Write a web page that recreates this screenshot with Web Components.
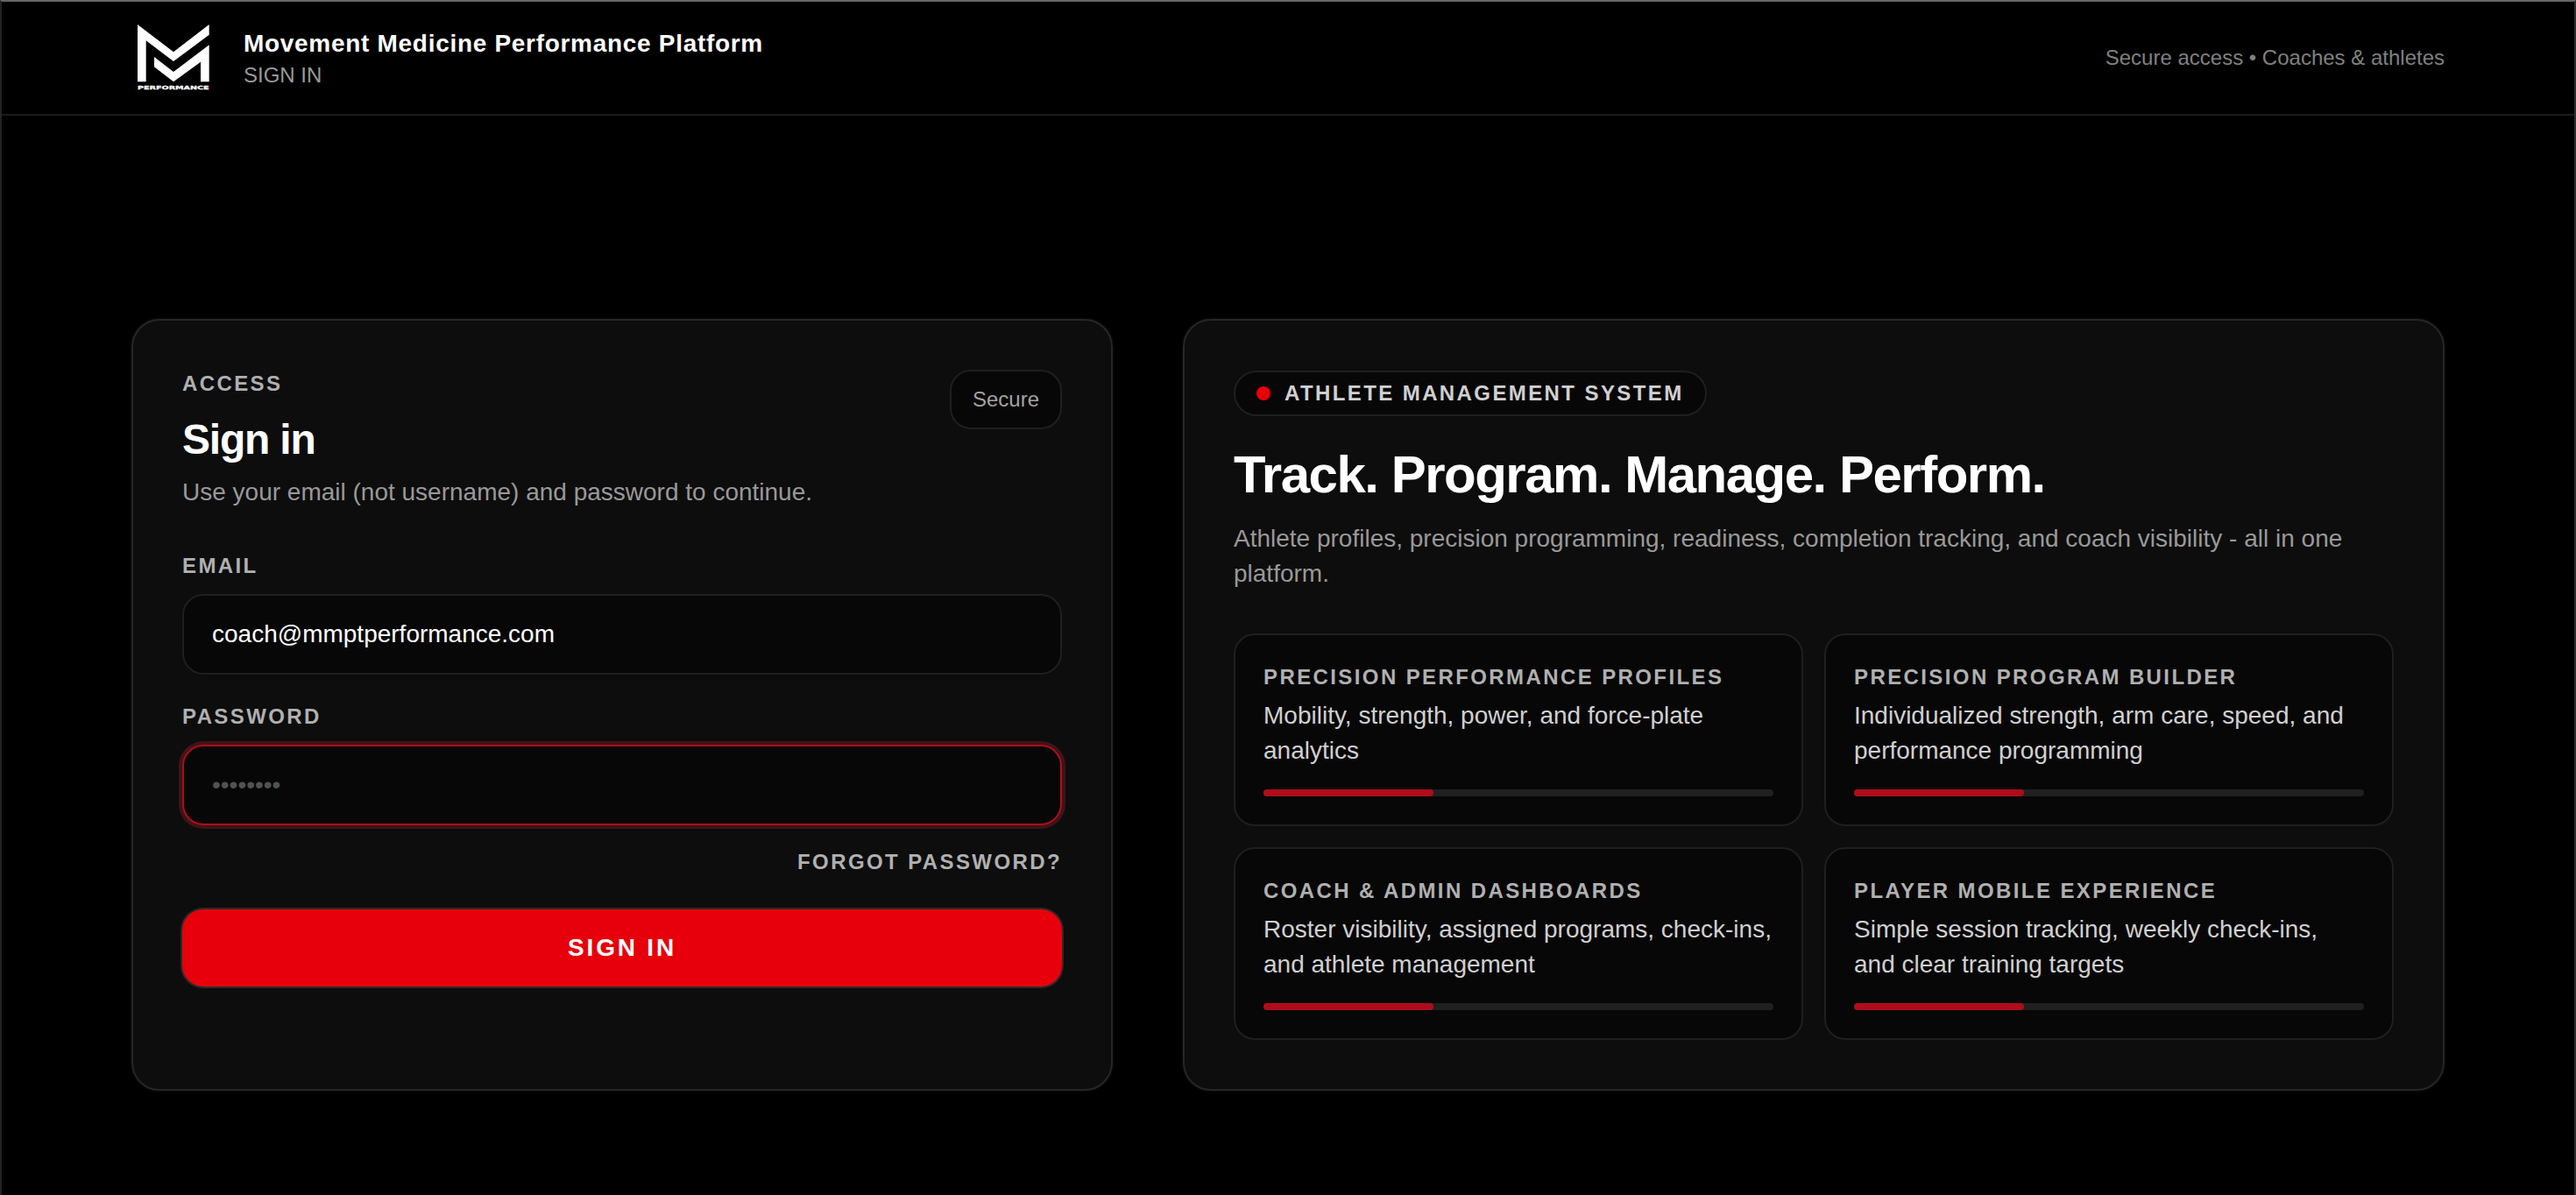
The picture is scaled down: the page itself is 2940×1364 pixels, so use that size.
<!DOCTYPE html>
<html lang="en">
<head>
<meta charset="utf-8">
<title>Movement Medicine Performance Platform</title>
<style>
  html, body { margin: 0; height: 100%; background: #000; }
  body {
    font-family: "Liberation Sans", Arial, sans-serif;
    font-size: 28px;
    line-height: 40px;
    color: #fff;
    --panel: #0d0d0d;
    --inset: #070707;
    --line: #262626;
    --line-soft: #1f1f1f;
    --red: #e7000b;
    --red-dim: #ae0d1a;
  }
</style>
</head>
<body>
<mm-page>
  <mm-header slot="header" heading="Movement Medicine Performance Platform" sub="SIGN IN">Secure access • Coaches &amp; athletes</mm-header>

  <mm-panel>
    <mm-login></mm-login>
  </mm-panel>

  <mm-panel>
    <mm-hero>
      <span slot="pill">ATHLETE MANAGEMENT SYSTEM</span>
      <span slot="title">Track. Program. Manage. Perform.</span>
      <span slot="lead">Athlete profiles, precision programming, readiness, completion tracking, and coach visibility - all in one platform.</span>
      <mm-feature label="PRECISION PERFORMANCE PROFILES">Mobility, strength, power, and force-plate analytics</mm-feature>
      <mm-feature label="PRECISION PROGRAM BUILDER">Individualized strength, arm care, speed, and performance programming</mm-feature>
      <mm-feature label="COACH &amp; ADMIN DASHBOARDS">Roster visibility, assigned programs, check-ins, and athlete management</mm-feature>
      <mm-feature label="PLAYER MOBILE EXPERIENCE">Simple session tracking, weekly check-ins, and clear training targets</mm-feature>
    </mm-hero>
  </mm-panel>
</mm-page>

<script>
(() => {
  class Base extends HTMLElement {
    constructor() {
      super();
      this.attachShadow({ mode: "open" });
    }

    connectedCallback() {
      this.shadowRoot.innerHTML = `
        <style>*, :host { box-sizing: border-box; }</style>
        ${this.template()}
      `;
    }

    text(name) {
      const span = document.createElement("span");
      span.textContent = this.getAttribute(name) || "";
      return span.innerHTML;
    }
  }

  class MmPage extends Base {
    template() {
      return `
        <style>
          :host {
            display: flex;
            flex-direction: column;
            width: 100%;
            height: 1364px;
            border: 2px solid #2e2e2e;
            border-left-color: #242424;
            border-top-color: #666;
            border-bottom: 0;
            overflow: hidden;
          }
          main {
            display: grid;
            grid-template-columns: 7fr 9fr;
            gap: 80px;
            padding: 232px 148px 0;
          }
        </style>
        <slot name="header"></slot>
        <main><slot></slot></main>
      `;
    }
  }

  class MmLogo extends Base {
    template() {
      return `
        <style>
          :host { display: block; width: 82px; height: 76px; }
          svg { display: block; width: 100%; height: 100%; }
        </style>
        <svg viewBox="51 54 246 228" fill="#fff">
          <path d="M51 54 174 148 296 54V89L174 180 80 109V250H51Z"/>
          <path d="M108 165 174 216 296 124V250H267V182L174 250 108 199Z"/>
          <text x="51" y="276.5" font-family="DejaVu Sans" font-weight="700" font-size="17"
            stroke="#fff" stroke-width="0.8" textLength="245" lengthAdjust="spacingAndGlyphs">PERFORMANCE</text>
        </svg>
      `;
    }
  }

  class MmHeader extends Base {
    template() {
      return `
        <style>
          :host {
            display: flex;
            align-items: center;
            justify-content: space-between;
            height: 130px;
            padding: 0 148px 0 155px;
            border-bottom: 2px solid #1c1c1c;
          }
          .brand { display: flex; align-items: center; gap: 39px; }
          .title { font-weight: 700; letter-spacing: 0.025em; line-height: 40px; }
          .sub { font-size: 24px; line-height: 32px; color: #999; }
          .note { font-size: 24px; line-height: 32px; color: #808080; }
        </style>
        <div class="brand">
          <mm-logo></mm-logo>
          <div>
            <div class="title">${this.text("heading")}</div>
            <div class="sub">${this.text("sub")}</div>
          </div>
        </div>
        <div class="note"><slot></slot></div>
      `;
    }
  }

  class MmPanel extends Base {
    template() {
      return `
        <style>
          :host {
            display: block;
            height: 881px;
            padding: 56px;
            border: 2px solid var(--line);
            border-radius: 32px;
            background: var(--panel);
            box-shadow: 0 0 0 2px #060606;
          }
        </style>
        <slot></slot>
      `;
    }
  }

  class MmField extends Base {
    template() {
      const type = this.getAttribute("type") || "text";
      return `
        <style>
          :host { display: block; }
          label {
            display: block;
            font-size: 24px;
            font-weight: 700;
            line-height: 32px;
            letter-spacing: 0.1em;
            color: #b0b0b0;
          }
          .box {
            display: flex;
            align-items: center;
            height: 92px;
            margin-top: 16px;
            padding: 0 32px;
            border: 2px solid var(--line-soft);
            border-radius: 24px;
            background: var(--inset);
          }
          :host([active]) .box { border-color: var(--red-dim); box-shadow: 0 0 0 4px #3f1417; }
          input {
            width: 100%;
            padding: 0;
            border: 0;
            outline: 0;
            background: none;
            color: #fff;
            font: inherit;
          }
          input::placeholder { color: #525252; opacity: 1; }
        </style>
        <label>${this.text("label")}</label>
        <div class="box">
          <input type="${type}" value="${this.text("value")}" placeholder="${this.text("placeholder")}">
        </div>
      `;
    }
  }

  class MmLogin extends Base {
    template() {
      return `
        <style>
          :host { display: block; }
          .top { display: flex; justify-content: space-between; align-items: flex-start; }
          .eyebrow { font-size: 24px; font-weight: 700; line-height: 32px; letter-spacing: 0.1em; color: #b0b0b0; }
          h1 { margin: 16px 0 0; font-size: 48px; line-height: 64px; letter-spacing: -0.025em; }
          p { margin: 8px 0 0; color: #999; }
          .tag {
            padding: 16px 24px;
            border: 2px solid var(--line-soft);
            border-radius: 24px;
            background: var(--inset);
            font-size: 24px;
            line-height: 32px;
            color: #a3a3a3;
          }
          mm-field { margin-top: 48px; }
          mm-field + mm-field { margin-top: 32px; }
          .forgot {
            margin-top: 26px;
            text-align: right;
            font-size: 24px;
            font-weight: 700;
            line-height: 32px;
            letter-spacing: 0.1em;
            color: #b0b0b0;
          }
          button {
            display: block;
            width: 100%;
            height: 88px;
            margin-top: 38px;
            padding: 0;
            border: 0;
            border-radius: 24px;
            background: var(--red);
            box-shadow: 0 0 0 2px #2a2a2a;
            color: #fff;
            font: inherit;
            font-weight: 700;
            letter-spacing: 0.1em;
          }
        </style>
        <div class="top">
          <div>
            <div class="eyebrow">ACCESS</div>
            <h1>Sign in</h1>
            <p>Use your email (not username) and password to continue.</p>
          </div>
          <div class="tag">Secure</div>
        </div>
        <mm-field label="EMAIL" value="coach@mmptperformance.com"></mm-field>
        <mm-field label="PASSWORD" type="password" placeholder="••••••••" active></mm-field>
        <div class="forgot">FORGOT PASSWORD?</div>
        <button>SIGN IN</button>
      `;
    }
  }

  class MmHero extends Base {
    template() {
      return `
        <style>
          :host { display: block; }
          .pill {
            display: flex;
            align-items: center;
            gap: 16px;
            width: fit-content;
            height: 52px;
            margin-top: 1px;
            padding: 0 24px;
            border: 2px solid var(--line-soft);
            border-radius: 26px;
            background: var(--inset);
            font-size: 24px;
            font-weight: 700;
            line-height: 32px;
            letter-spacing: 0.1em;
            color: #d0d0d0;
          }
          .dot { width: 16px; height: 16px; border-radius: 50%; background: var(--red); }
          h2 { margin: 31px 0 0; font-size: 60px; line-height: 72px; letter-spacing: -0.025em; }
          p { margin: 17px 0 0; color: #999; }
          .grid { display: grid; grid-template-columns: 1fr 1fr; gap: 24px; margin-top: 48px; }
        </style>
        <div class="pill"><span class="dot"></span><slot name="pill"></slot></div>
        <h2><slot name="title"></slot></h2>
        <p><slot name="lead"></slot></p>
        <div class="grid"><slot></slot></div>
      `;
    }
  }

  class MmFeature extends Base {
    template() {
      return `
        <style>
          :host {
            display: block;
            height: 220px;
            padding: 32px 32px 0;
            border: 2px solid var(--line-soft);
            border-radius: 24px;
            background: var(--inset);
          }
          .label { font-size: 24px; font-weight: 700; line-height: 32px; letter-spacing: 0.1em; color: #b0b0b0; }
          .text { margin-top: 8px; color: #d0d0d0; }
          .bar { height: 8px; margin-top: 24px; border-radius: 4px; background: #202020; }
          .fill { width: 33.333%; height: 100%; border-radius: 4px; background: var(--red-dim); }
        </style>
        <div class="label">${this.text("label")}</div>
        <div class="text"><slot></slot></div>
        <div class="bar"><div class="fill"></div></div>
      `;
    }
  }

  customElements.define("mm-logo", MmLogo);
  customElements.define("mm-header", MmHeader);
  customElements.define("mm-field", MmField);
  customElements.define("mm-login", MmLogin);
  customElements.define("mm-feature", MmFeature);
  customElements.define("mm-hero", MmHero);
  customElements.define("mm-panel", MmPanel);
  customElements.define("mm-page", MmPage);
})();
</script>
</body>
</html>
